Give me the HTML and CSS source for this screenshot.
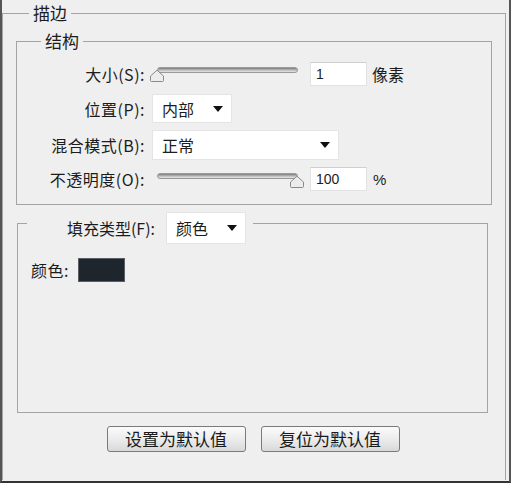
FILE: index.html
```html
<!DOCTYPE html>
<html lang="zh-CN">
<head>
    <meta charset="UTF-8">
    <title>描边</title>
    <link rel="stylesheet" href="styles.css">
</head>
<body>
    <div class="dialog">
        <fieldset class="group outer">
            <legend class="title outer-title">描边</legend>

            <fieldset class="group structure">
                <legend class="title structure-title">结构</legend>
                <div class="form">
                    <label class="lbl">大小(S):</label>
                    <div class="ctrl">
                        <div class="slider">
                            <span class="track"></span>
                            <svg class="thumb thumb-min" width="16" height="13" viewBox="0 0 16 13">
                                <path d="M1.5 11.5 V7 L8 1.2 L14.5 7 V11.5 Q14.5 12.5 13.5 12.5 H2.5 Q1.5 12.5 1.5 11.5 Z" fill="#ececec" stroke="#8a8a8a"/>
                            </svg>
                        </div>
                        <input class="num" type="text" value="1">
                        <span class="unit">像素</span>
                    </div>

                    <label class="lbl">位置(P):</label>
                    <div class="ctrl">
                        <div class="select select-short"><span>内部</span><i class="arrow"></i></div>
                    </div>

                    <label class="lbl">混合模式(B):</label>
                    <div class="ctrl">
                        <div class="select select-long"><span>正常</span><i class="arrow"></i></div>
                    </div>

                    <label class="lbl">不透明度(O):</label>
                    <div class="ctrl">
                        <div class="slider">
                            <span class="track"></span>
                            <svg class="thumb thumb-max" width="16" height="13" viewBox="0 0 16 13">
                                <path d="M1.5 11.5 V7 L8 1.2 L14.5 7 V11.5 Q14.5 12.5 13.5 12.5 H2.5 Q1.5 12.5 1.5 11.5 Z" fill="#ececec" stroke="#8a8a8a"/>
                            </svg>
                        </div>
                        <input class="num" type="text" value="100">
                        <span class="unit pct">%</span>
                    </div>
                </div>
            </fieldset>

            <fieldset class="group fill">
                <legend class="fill-legend">
                    <span class="fill-label">填充类型(F):</span>
                    <div class="select select-fill"><span>颜色</span><i class="arrow"></i></div>
                </legend>
                <div class="color-row">
                    <span>颜色:</span>
                    <span class="swatch"></span>
                </div>
            </fieldset>

            <div class="buttons">
                <button class="btn">设置为默认值</button>
                <button class="btn">复位为默认值</button>
            </div>
        </fieldset>
    </div>
</body>
</html>
```

FILE: styles.css
```css
* {
    margin: 0;
    padding: 0;
    box-sizing: border-box;
}

body {
    background: #efefef;
    font-family: "Noto Sans CJK SC", sans-serif;
    color: #1c1c1c;
}

.dialog {
    width: 511px;
    height: 483px;
    background: #efefef;
    border-left: 2px solid #555;
    border-right: 2px solid #555;
    border-bottom: 2px solid #333;
    overflow: hidden;
}

.group {
    border: 1px solid #a4a4a4;
    min-width: 0;
}

.title {
    font-size: 17px;
    line-height: 20px;
    padding: 0 4px;
}

/* outer group */
.outer {
    margin: 3px 3px 0 0;
    padding: 8px 13px 28px;
    border-bottom: none;
}

.outer-title {
    margin-left: 13px;
}

/* structure group */
.structure {
    padding: 10px 0 13px;
}

.structure-title {
    margin-left: 24px;
}

.form {
    display: grid;
    grid-template-columns: 128px auto;
    grid-template-rows: 26px 29px 30px 24px;
    column-gap: 5px;
    row-gap: 7px;
}

.lbl {
    font-size: 16px;
    letter-spacing: 0.5px;
    text-align: right;
    align-self: center;
    line-height: 20px;
}

.ctrl {
    display: flex;
    align-items: center;
    gap: 5px;
}

.slider {
    position: relative;
    width: 155px;
    height: 100%;
}

.track {
    display: block;
    margin: 6px 0 0 7px;
    width: 141px;
    height: 6px;
    border-radius: 3px;
    border: 1px solid #9a9a9a;
    background: linear-gradient(#7d7d7d, #c4c4c4 60%, #e4e4e4);
}

.thumb {
    position: absolute;
    top: 8px;
}

.thumb-min {
    left: -1px;
}

.thumb-max {
    left: 139px;
}

.num {
    width: 57px;
    height: 24px;
    border: 1px solid #e2e2e2;
    border-top-color: #cfcfcf;
    background: #fff;
    font-family: "Liberation Sans", sans-serif;
    font-size: 14px;
    color: #1c1c1c;
    padding: 0 5px;
    outline: none;
}

.unit {
    font-size: 16px;
}

.pct {
    margin-left: 1px;
    font-family: "Liberation Sans", sans-serif;
    font-size: 15px;
}

.select {
    display: flex;
    align-items: center;
    justify-content: space-between;
    height: 100%;
    margin-left: 2px;
    padding: 0 8px 0 9px;
    background: #fff;
    border: 1px solid #e4e4e4;
    font-size: 16px;
}

.select-short {
    width: 80px;
}

.select-long {
    width: 187px;
}

.arrow {
    width: 0;
    height: 0;
    border-left: 5px solid transparent;
    border-right: 5px solid transparent;
    border-top: 6px solid #111;
}

/* fill group */
.fill {
    margin: 7px 4px 0 1px;
    padding: 24px 0 130px 13px;
}

.fill-legend {
    display: flex;
    align-items: flex-start;
    height: 22px;
    padding: 0 7px 0 0;
    margin-left: -4px;
}

.fill-label {
    width: 128px;
    text-align: right;
    font-size: 16px;
    line-height: 32px;
}

.select-fill {
    width: 80px;
    height: 32px;
    margin-left: 11px;
}

.color-row {
    display: flex;
    align-items: center;
    gap: 9px;
    font-size: 16px;
    letter-spacing: 0.5px;
}

.swatch {
    width: 47px;
    height: 24px;
    background: #1f252c;
    border: 1px solid #5a5f66;
}

/* buttons */
.buttons {
    display: flex;
    justify-content: center;
    gap: 15px;
    margin-top: 13px;
    padding-right: 2px;
}

.btn {
    width: 139px;
    height: 26px;
    border: 1px solid #7a7a7a;
    border-radius: 3px;
    background: linear-gradient(#fbfbfb, #ececec 50%, #d9d9d9);
    font-family: "Noto Sans CJK SC", sans-serif;
    font-size: 17px;
    line-height: 22px;
    color: #1a1a1a;
}
```
